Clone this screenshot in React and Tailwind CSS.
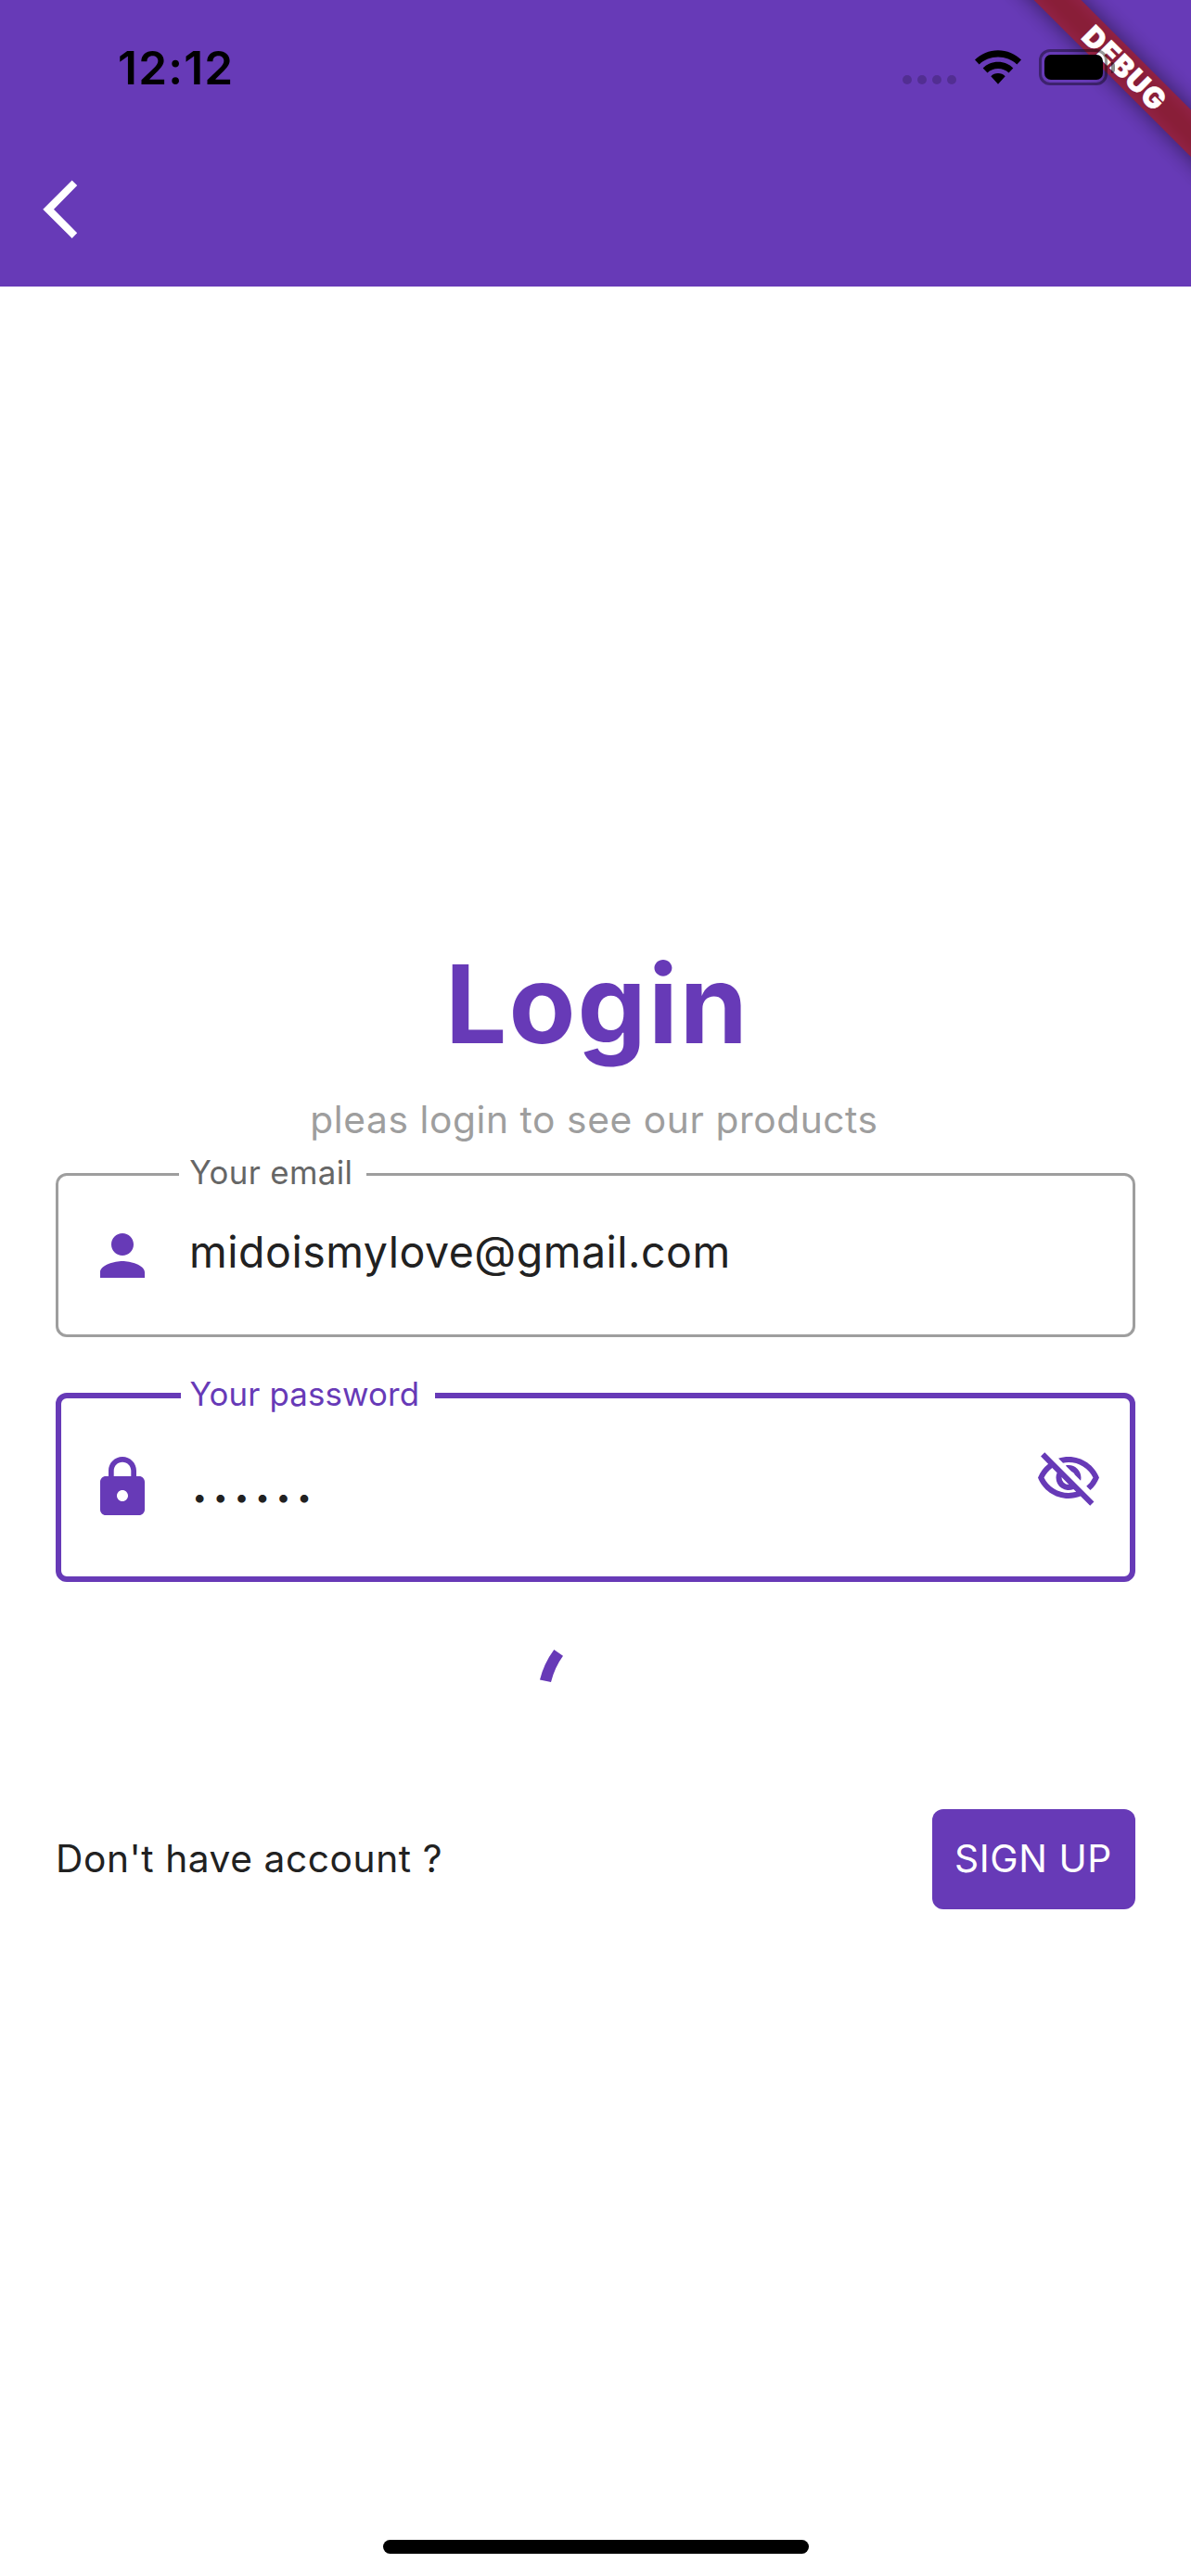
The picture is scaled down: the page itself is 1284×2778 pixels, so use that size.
import React from "react";
import { MdPerson, MdLock, MdOutlineVisibilityOff } from "react-icons/md";

function DebugRibbon() {
  return (
    <div className="absolute right-0 top-0 h-[309px] w-[309px] overflow-hidden">
      <div className="absolute left-[37.3px] top-[53.5px] h-[36.4px] w-[400px] rotate-45">
        <div className="absolute inset-0 bg-black/50 blur-[12px]" />
        <div className="absolute inset-0 flex items-center justify-center bg-[#b71c1c]/63">
          <span className="pl-[3px] text-[31px] font-black leading-none tracking-[1.2px] text-white [-webkit-text-stroke:0.5px_white]">DEBUG</span>
        </div>
      </div>
    </div>
  );
}

function WifiIcon() {
  return (
    <svg viewBox="0 0 50 37" className="h-[37px] w-[50px]" fill="#000">
      <path d="M25 0.3c9.6 0 18.4 3.9 25 10.2l-4.7 4.9C39.9 10.4 32.8 7.600 25 7.600S10.100 10.400 4.700 15.400L0 10.500C6.600 4.200 15.400 0.300 25 0.300z" />
      <path d="M25 12.800c6.400 0 12.100 2.500 16.300 6.600l-4.800 5C33.500 21.500 29.500 19.900 25 19.900s-8.500 1.600-11.500 4.500l-4.800-5C12.900 15.300 18.600 12.800 25 12.800z" />
      <path d="M25 25.100c3 0 5.700 1.200 7.700 3.200L25 36.800l-7.700-8.500c2-2 4.700-3.200 7.700-3.200z" />
    </svg>
  );
}

function Battery() {
  return (
    <div className="flex items-center gap-[4px]">
      <div className="h-[39px] w-[74px] rounded-[12px] border-[3px] border-black/40 p-[3px]">
        <div className="-ml-[0.5px] h-full w-[63px] rounded-[7px] bg-black" />
      </div>
      <div className="h-[12px] w-[4px] rounded-r-full bg-black/45" />
    </div>
  );
}

function Header() {
  return (
    <header className="relative flex h-[309px] shrink-0 flex-col bg-[#673ab7]">
      <DebugRibbon />
      <div className="relative flex h-[145px] items-center pl-[127px] pr-[82px]">
        <span className="text-[49.5px] font-semibold leading-[60px] tracking-[1.2px] text-black">12:12</span>
        <div className="ml-auto flex items-center gap-[19.5px]">
          <div className="mt-[27px] flex gap-[6px]">
            <i className="size-[10px] rounded-full bg-black/20" />
            <i className="size-[10px] rounded-full bg-black/20" />
            <i className="size-[10px] rounded-full bg-black/20" />
            <i className="size-[10px] rounded-full bg-black/20" />
          </div>
          <WifiIcon />
          <Battery />
        </div>
      </div>
      <svg viewBox="0 0 38 64" className="ml-[46px] mt-[49px] h-[64px] w-[38px]" fill="#fff">
        <path d="M31.600 0.400L37.200 6L12 31.700L37.200 57.300L31.600 62.900L0.300 31.700z" />
      </svg>
    </header>
  );
}

export default function App() {
  return (
    <div className="flex h-[2778px] w-[1284px] flex-col overflow-hidden bg-white font-['Inter',sans-serif] text-[#212121]">
      <Header />
      <main className="flex flex-col px-[60px] pt-[703px]">
        <h1 className="pl-[4px] text-center text-[117.500px] font-bold leading-[140px] tracking-[2.1px] text-[#673ab7]">Login</h1>
        <p className="mt-[31px] whitespace-nowrap pr-[3px] text-center text-[40.7px] leading-[50px] tracking-[0.59px] text-[#9e9e9e]">
          pleas login to see our products
        </p>

        <div className="relative mt-[32px] flex h-[177px] items-start rounded-[12px] border-[3px] border-[#9e9e9e] pl-[33px]">
          <label className="absolute -top-[24px] left-[130.3px] w-[201.700px] whitespace-nowrap bg-white pl-[11px] text-[34.800px] leading-[40px] tracking-[0.36px] text-[#666]">
            Your email
          </label>
          <MdPerson className="mt-[50px] size-[72px] text-[#673ab7]" />
          <span className="ml-[36px] mt-[52px] text-[46.500px] leading-[60px] tracking-[0.51px]">midoismylove@gmail.com</span>
        </div>

        <div className="relative mt-[60px] flex h-[203.500px] items-start rounded-[12px] border-[6px] border-[#673ab7] px-[30px]">
          <label className="absolute -top-[25px] left-[129px] w-[274px] whitespace-nowrap bg-white pl-[9.500px] text-[34.800px] leading-[40px] tracking-[0.15px] text-[#673ab7]">
            Your password
          </label>
          <MdLock className="mt-[60px] size-[72px] text-[#673ab7]" />
          <span className="ml-[39.500px] mt-[86px] text-[27.500px] leading-[40px] tracking-[7.1px]">••••••</span>
          <MdOutlineVisibilityOff className="ml-auto mt-[51px] size-[72px] text-[#673ab7]" />
        </div>

        <svg viewBox="576 1768 132 108" className="mt-[62.500px] h-[108px] w-[132px] self-center" fill="#673ab7">
          <path d="M582 1811.500Q586.300 1794 597.300 1779L607 1785.700Q597.900 1798.200 594 1814Z" />
        </svg>

        <div className="mt-[75px] flex h-[108px] items-center justify-between text-[40.700px] leading-[50px]">
          <span className="mb-[1px] tracking-[0.57px]">Don't have account ?</span>
          <button className="flex h-[108px] w-[219px] items-center rounded-[12px] bg-[#673ab7] pb-[1px] pl-[24px] tracking-[0.6px] text-white">
            SIGN UP
          </button>
        </div>
      </main>
      <div className="mb-[24px] mt-auto h-[15px] w-[459px] self-center rounded-full bg-black" />
    </div>
  );
}
